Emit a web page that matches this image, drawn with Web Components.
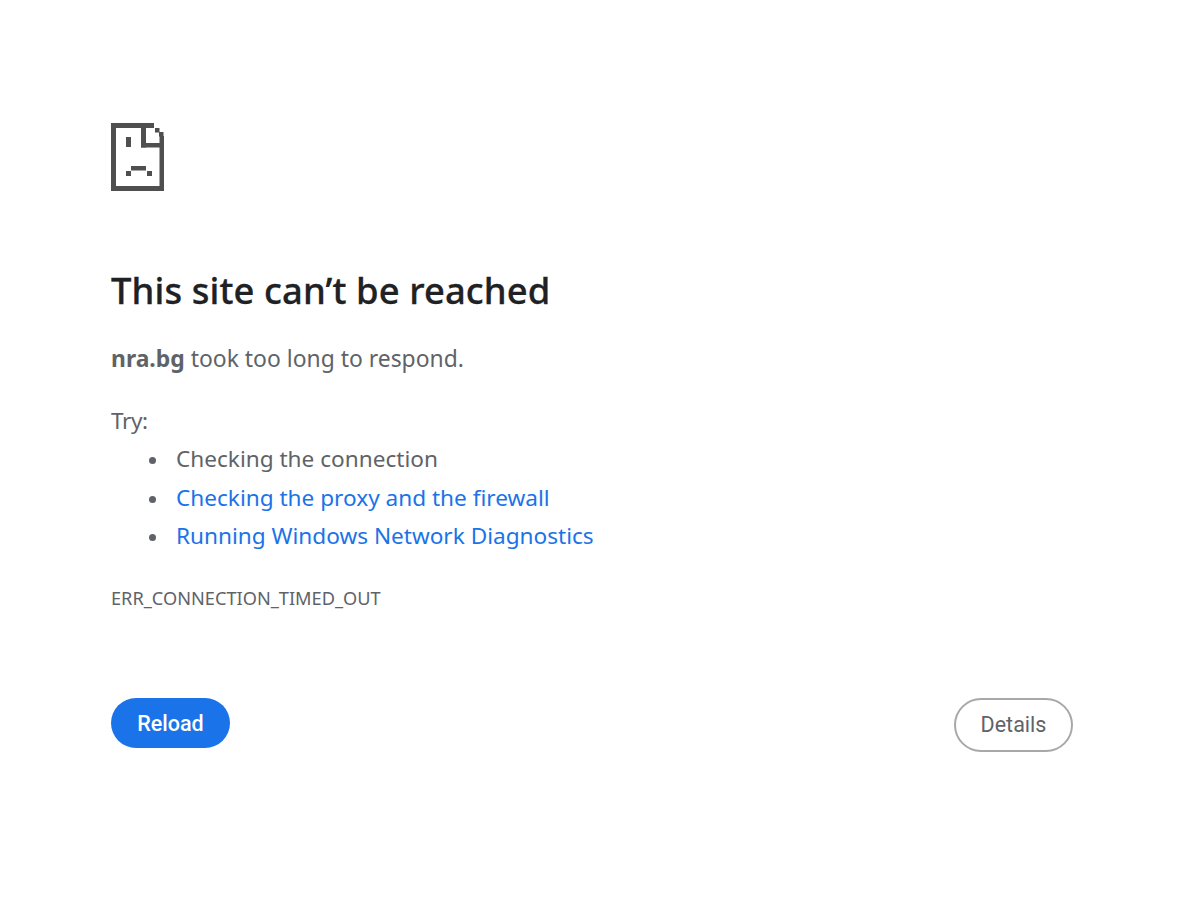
<!DOCTYPE html>
<html lang="en">
<head>
<meta charset="utf-8">
<title>nra.bg</title>
<style>
  html, body { margin: 0; background: #fff; }
  a { color: #1a73e8; text-decoration: none; }
  b { color: #5f6368; }
</style>
</head>
<body>
<error-page>
  <sad-page slot="icon"></sad-page>
  <span slot="title">This site can’t be reached</span>
  <span slot="summary"><b>nra.bg</b> took too long to respond.</span>
  <try-list slot="tips">
    <li>Checking the connection</li>
    <li><a href="#">Checking the proxy and the firewall</a></li>
    <li><a href="#">Running Windows Network Diagnostics</a></li>
  </try-list>
  <span slot="code">ERR_CONNECTION_TIMED_OUT</span>
  <pill-button slot="reload" kind="primary">Reload</pill-button>
  <pill-button slot="details">Details</pill-button>
</error-page>
<script>
class SadPage extends HTMLElement {
  constructor() {
    super();
    this.attachShadow({ mode: "open" });
    this.shadowRoot.innerHTML = `
      <style>
        :host { display: block; width: 54px; height: 68px; }
        svg { display: block; filter: blur(0.4px); }
      </style>
      <svg width="54" height="68" viewBox="0 0 54 68" fill="#4f4f4f">
        <rect x="0" y="0" width="43" height="5"/>
        <rect x="0" y="0" width="5" height="68"/>
        <rect x="0" y="63" width="53" height="5"/>
        <rect x="48.5" y="13" width="4.5" height="55"/>
        <rect x="30" y="0" width="5" height="24.5"/>
        <rect x="30" y="20" width="19" height="4.5"/>
        <rect x="44" y="5" width="4.5" height="4.5"/>
        <rect x="48" y="9" width="4.5" height="4.5"/>
        <rect x="15" y="14" width="5" height="10"/>
        <rect x="20" y="43" width="15" height="4.5"/>
        <rect x="15" y="48" width="5" height="5"/>
        <rect x="36" y="48" width="5" height="5"/>
      </svg>`;
  }
}
customElements.define("sad-page", SadPage);

class TryList extends HTMLElement {
  constructor() {
    super();
    this.attachShadow({ mode: "open" });
    this.shadowRoot.innerHTML = `
      <style>
        :host { display: block; font-size: 22.6px; }
        p { margin: 0 0 5px; height: 29px; line-height: 29px; letter-spacing: -0.4px; }
        ul { margin: 0; padding: 0 0 0 65px; }
        ::slotted(li) { display: block; height: 38.5px; line-height: 38.5px; }
        ::slotted(li)::before {
          content: "";
          display: inline-block;
          width: 7px;
          height: 7px;
          margin: 0 20px 0 -27px;
          border-radius: 50%;
          background: #5f6368;
          vertical-align: 3px;
        }
      </style>
      <p>Try:</p>
      <ul><slot></slot></ul>`;
  }
}
customElements.define("try-list", TryList);

class PillButton extends HTMLElement {
  constructor() {
    super();
    this.attachShadow({ mode: "open" });
    this.shadowRoot.innerHTML = `
      <style>
        :host {
          display: flex;
          align-items: center;
          justify-content: center;
          box-sizing: border-box;
          width: 119px;
          height: 54px;
          border: 2px solid #a8a8a8;
          border-radius: 27px;
          color: #5f6368;
          font: 400 21.5px Roboto, sans-serif;
          cursor: pointer;
        }
        :host([kind="primary"]) {
          height: 50px;
          border: 0;
          background: #1a73e8;
          color: #fff;
          font-weight: 500;
          padding-top: 1px;
        }
      </style>
      <slot></slot>`;
  }
}
customElements.define("pill-button", PillButton);

class ErrorPage extends HTMLElement {
  constructor() {
    super();
    this.attachShadow({ mode: "open" });
    this.shadowRoot.innerHTML = `
      <style>
        :host {
          display: block;
          box-sizing: border-box;
          width: 1200px;
          height: 900px;
          padding: 123px 127px 0 111px;
          color: #5f6368;
          font: 400 22.9px "Noto Sans", sans-serif;
        }
        h1 {
          margin: 73px 0 0;
          height: 52px;
          line-height: 52px;
          color: #202124;
          font-size: 36.4px;
          font-weight: 500;
          letter-spacing: 0.1px;
          -webkit-text-stroke: 0.3px #202124;
        }
        .summary { margin: 28px 0 0; height: 30px; line-height: 30px; }
        .tips { margin-top: 32px; }
        .code { margin-top: 28px; height: 28px; line-height: 28px; font-size: 18.2px; color: #5f6368; }
        .buttons { display: flex; justify-content: space-between; align-items: flex-start; margin-top: 86px; }
      </style>
      <slot name="icon"></slot>
      <h1><slot name="title"></slot></h1>
      <div class="summary"><slot name="summary"></slot></div>
      <div class="tips"><slot name="tips"></slot></div>
      <div class="code"><slot name="code"></slot></div>
      <div class="buttons"><slot name="reload"></slot><slot name="details"></slot></div>`;
  }
}
customElements.define("error-page", ErrorPage);
</script>
</body>
</html>
